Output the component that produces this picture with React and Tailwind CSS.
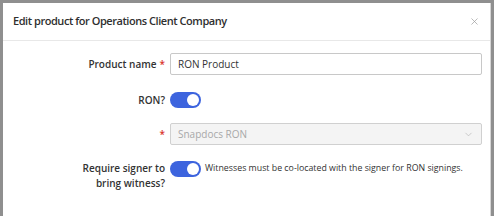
import { X, ChevronDown } from "lucide-react";

function Toggle() {
  return (
    <div className="w-[31px] h-[16px] rounded-full bg-[#3d64de] flex items-center justify-end pr-[2px] shrink-0">
      <div className="w-[12px] h-[12px] rounded-full bg-white" />
    </div>
  );
}

function Label({ children, required }) {
  return (
    <div className="w-[167px] shrink-0 flex justify-end pr-[5px] text-[10px] font-semibold text-[#333] leading-[15px] text-right">
      <span>{children}</span>
      {required && <span className="text-[#d9342b] ml-[3px]">*</span>}
    </div>
  );
}

export default function App() {
  return (
    <div
      className="w-[494px] h-[216px] bg-[#8f8f8f] pt-[3px] pl-[3px] pr-[3px] overflow-hidden"
      style={{ fontFamily: '"Open Sans", "Liberation Sans", sans-serif' }}
    >
      <div className="bg-white h-full border-r border-[#d6d6d6]">
        {/* header */}
        <div className="h-[38px] flex items-center justify-between pl-[10px] pr-[10px] border-b border-[#e8e8e8]">
          <h2 className="text-[11px] tracking-[-0.45px] font-semibold text-[#2f2f2f]">Edit product for Operations Client Company</h2>
          <X size={11} strokeWidth={1.5} className="text-[#9a9a9a]" />
        </div>

        {/* body */}
        <div className="pr-[8px]">
          <div className="flex items-center mt-[12px]">
            <Label required>Product name</Label>
            <div className="flex-1 h-[22px] border border-[#c8c8c8] rounded-[2px] flex items-center px-[7px] text-[10px] text-[#333]">
              RON Product
            </div>
          </div>

          <div className="flex items-center mt-[17px]">
            <Label>RON?</Label>
            <Toggle />
          </div>

          <div className="flex items-center mt-[15px]">
            <Label required></Label>
            <div className="flex-1 h-[22px] border border-[#d0d0d0] bg-[#f4f4f4] rounded-[2px] flex items-center justify-between px-[7px] text-[10px] text-[#a8a8a8]">
              <span>Snapdocs RON</span>
              <ChevronDown size={11} strokeWidth={1.5} className="text-[#b8b8b8]" />
            </div>
          </div>

          <div className="flex items-start mt-[16px]">
            <Label>
              Require signer to
              <br />
              bring witness?
            </Label>
            <Toggle />
            <span className="ml-[4px] text-[8.8px] text-[#333] leading-[15px]">
              Witnesses must be co-located with the signer for RON signings.
            </span>
          </div>
        </div>
      </div>
    </div>
  );
}
